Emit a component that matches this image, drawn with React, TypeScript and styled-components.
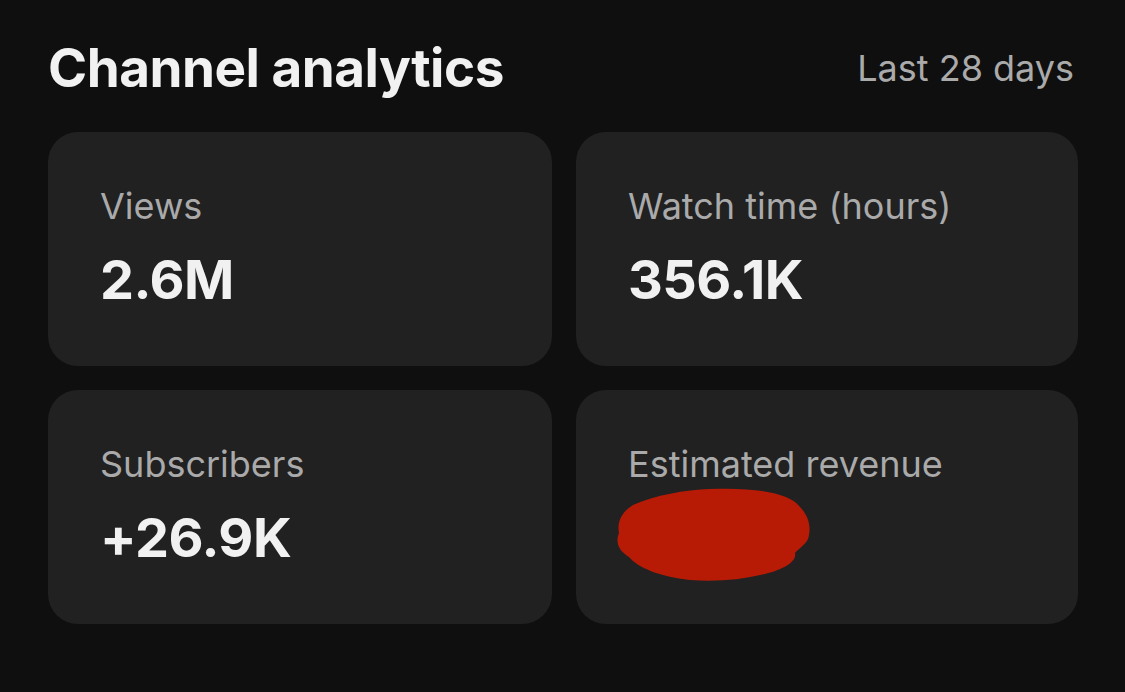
import React from "react";
import styled, { createGlobalStyle } from "styled-components";

const GlobalStyle = createGlobalStyle`
  html, body {
    margin: 0;
    padding: 0;
    background: #0f0f0f;
  }
  body {
    font-family: Inter, "Noto Sans", Roboto, sans-serif;
    -webkit-font-smoothing: antialiased;
  }
`;

const Page = styled.div`
  width: 1125px;
  height: 692px;
  box-sizing: border-box;
  padding: 36px 47px 0 48px;
  background: #0f0f0f;
  display: flex;
  flex-direction: column;
  gap: 32px;
`;

const Header = styled.div`
  display: flex;
  align-items: center;
  justify-content: space-between;
  padding: 0 4px 0 0;
`;

const Title = styled.h1`
  margin: 0;
  font-size: 53px;
  line-height: 64px;
  font-weight: 700;
  color: #f1f1f1;
  letter-spacing: -0.5px;
`;

const Period = styled.span`
  font-size: 36px;
  line-height: 64px;
  font-weight: 400;
  color: #aaaaaa;
`;

const Grid = styled.div`
  display: grid;
  grid-template-columns: 504px 502px;
  grid-auto-rows: 234px;
  column-gap: 24px;
  row-gap: 24px;
`;

const Card = styled.div`
  background: #212121;
  border-radius: 30px;
  padding: 52px 52px 0 52px;
  box-sizing: border-box;
  display: flex;
  flex-direction: column;
  gap: 20px;
`;

const Label = styled.div`
  font-size: 36px;
  line-height: 44px;
  font-weight: 400;
  color: #aaaaaa;
`;

const Value = styled.div`
  font-size: 54px;
  line-height: 64px;
  font-weight: 700;
  color: #f1f1f1;
  letter-spacing: -0.5px;
`;

const Scribble = styled.svg`
  display: block;
  margin: -19px 0 0 -13px;
`;

const stats = [
  { label: "Views", value: "2.6M" },
  { label: "Watch time (hours)", value: "356.1K" },
  { label: "Subscribers", value: "+26.9K" },
  { label: "Estimated revenue", value: null },
];

export default function App() {
  return (
    <>
      <GlobalStyle />
      <Page>
        <Header>
          <Title>Channel analytics</Title>
          <Period>Last 28 days</Period>
        </Header>
        <Grid>
          {stats.map((s) => (
            <Card key={s.label}>
              <Label>{s.label}</Label>
              {s.value ? (
                <Value>{s.value}</Value>
              ) : (
                <Scribble width="200" height="97" viewBox="0 0 200 97">
                  <path
                    d="M95,2 C140,0 175,6 185,20 C193,28 197,40 193,52 C190,58 183,62 180,66 C182,74 170,82 150,87 C125,93 100,95 75,93 C45,90 22,80 14,70 C4,64 0,56 4,46 C2,36 6,25 18,18 C40,8 70,3 95,2 Z"
                    fill="#b71b06"
                  />
                </Scribble>
              )}
            </Card>
          ))}
        </Grid>
      </Page>
    </>
  );
}
